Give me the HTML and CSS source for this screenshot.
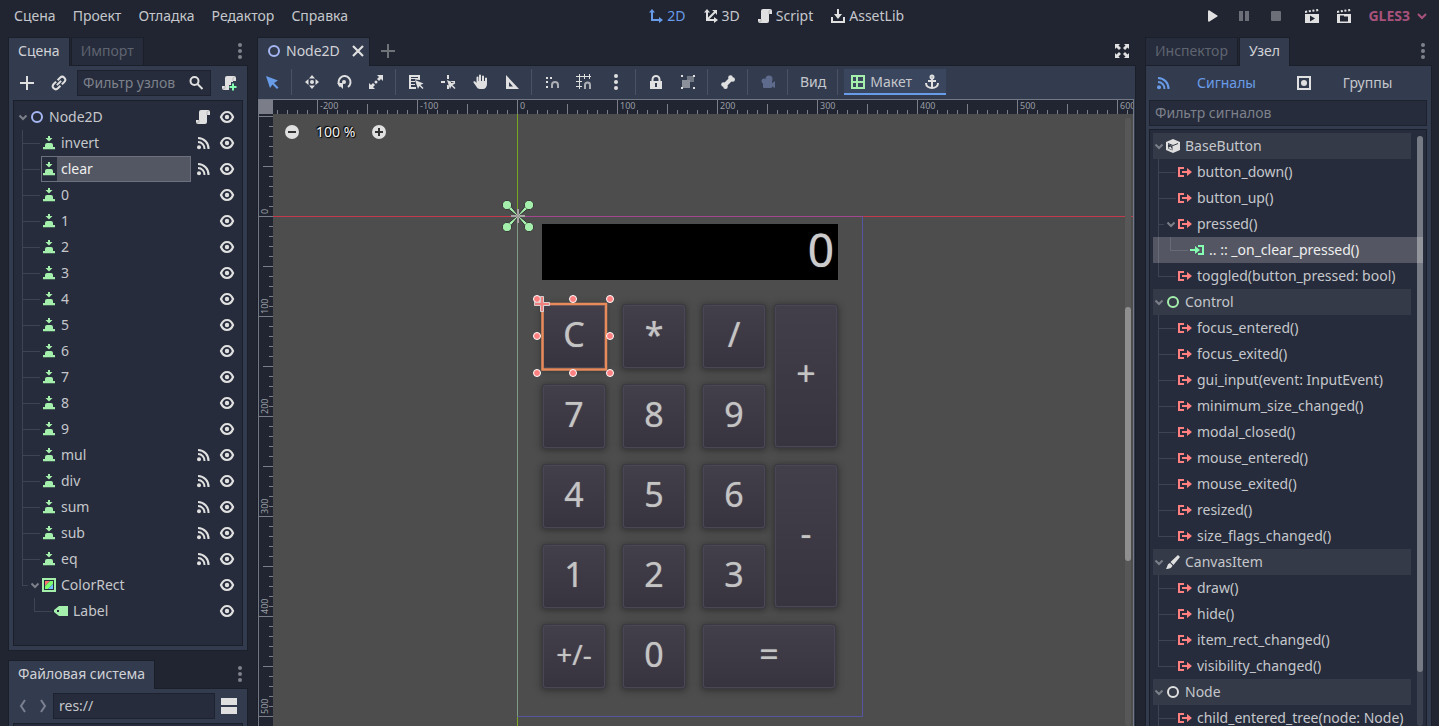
FILE: index.html
```html
<!DOCTYPE html>
<html lang="ru">
<head>
<meta charset="utf-8">
<title>Node2D</title>
<link rel="stylesheet" href="styles.css">
</head>
<body>
<svg class="defs" aria-hidden="true">
  <symbol id="chev" viewBox="0 0 12 12"><path d="M2.500 4.500 6 8l3.500-3.500" fill="none" stroke="currentColor" stroke-width="2"/></symbol>
  <symbol id="ring" viewBox="0 0 16 16"><circle cx="8" cy="8" r="5" fill="none" stroke="currentColor" stroke-width="2"/></symbol>
  <symbol id="button" viewBox="0 0 16 16"><path fill="currentColor" d="M7 1h2v2h2.500L8 6.500 4.500 3H7zM6 8h4a2 2 0 0 1 2 2v2H4v-2a2 2 0 0 1 2-2zM2 12h12v2.300H2z"/></symbol>
  <symbol id="signal" viewBox="0 0 16 16"><g fill="none" stroke="currentColor" stroke-width="2"><path d="M3 3a10.500 10.500 0 0 1 10.500 11"/><path d="M3 7a6.500 6.500 0 0 1 6.500 7"/></g><circle cx="4" cy="12.300" r="2" fill="currentColor"/></symbol>
  <symbol id="eye" viewBox="0 0 16 16"><path fill="none" stroke="currentColor" stroke-width="2.200" d="M2 8c1.300-3.300 3.800-5 6-5s4.700 1.700 6 5c-1.300 3.300-3.800 5-6 5s-4.700-1.700-6-5z"/><circle cx="8" cy="8" r="2.200" fill="currentColor"/></symbol>
  <symbol id="script" viewBox="0 0 16 16"><path fill="#e0e0e0" d="M6 1a2 2 0 0 0-2 2v8H1v2a2 2 0 0 0 2 2h7a2 2 0 0 0 2-2V6h3V3a2 2 0 0 0-2-2z"/><path fill="none" stroke="#b4b4b4" d="M12 6V3.500A1.500 1.500 0 0 1 13.500 2M4 11v2a1 1 0 0 1-2 0"/></symbol>
  <symbol id="plus" viewBox="0 0 16 16"><path fill="currentColor" d="M7 1h2v6h6v2H9v6H7V9H1V7h6z"/></symbol>
  <symbol id="link" viewBox="0 0 16 16"><g fill="none" stroke="currentColor" stroke-width="2" transform="rotate(-45 8 8)"><path d="M7 5H3.500a3 3 0 0 0 0 6H7M9 5h3.500a3 3 0 0 1 0 6H9M5 8h6"/></g></symbol>
  <symbol id="search" viewBox="0 0 16 16"><circle cx="6.500" cy="6" r="4" fill="none" stroke="currentColor" stroke-width="2"/><path d="m9.500 9 5 5" stroke="currentColor" stroke-width="2"/></symbol>
  <symbol id="dots" viewBox="0 0 16 16"><g fill="currentColor"><circle cx="8" cy="2" r="2"/><circle cx="8" cy="8" r="2"/><circle cx="8" cy="14" r="2"/></g></symbol>
  <symbol id="close" viewBox="0 0 16 16"><path d="m3 3 10 10M13 3 3 13" stroke="currentColor" stroke-width="2.200"/></symbol>
  <symbol id="slot" viewBox="0 0 16 16"><path fill="currentColor" d="M1 7h5V4l5 4-5 4V9H1zM9 3h6v10H9v-2h4V5H9z"/></symbol>
  <symbol id="emit" viewBox="0 0 16 16"><path fill="currentColor" d="M1 3h6v2H3v6h4v2H1zM5 7h5V4l5 4-5 4V9H5z"/></symbol>
  <symbol id="clap" viewBox="0 0 16 16"><path fill="#e0e0e0" fill-rule="evenodd" d="m1 3 2-.4.4 2L1 5zM4.600 2.300l2-.4.4 2-2 .4zM8.200 1.800l2-.4.4 2-2 .4zM12 1.300l2-.3.4 2-2 .4zM1 6h14v9H1z"/></symbol>
  <symbol id="cursor" viewBox="0 0 16 16"><path fill="currentColor" d="m2 2 4 12 2.500-3.500L13 15l1.500-1.500L10 9l4-2.500z"/></symbol>
</svg>

<header class="menubar">
  <nav class="menus">
    <button>Сцена</button><button>Проект</button><button>Отладка</button><button>Редактор</button><button>Справка</button>
  </nav>
  <div class="menus">
    <button class="blue"><svg class="i" viewBox="0 0 16 16"><path fill="currentColor" d="M4 1 1 4.500h2V13h8v2l4-3-4-3v2H5V4.500h2z"/></svg>2D</button>
    <button><svg class="i" viewBox="0 0 16 16"><path fill="#e0e0e0" d="M4 1 1 4.500h2V13h8v2l4-3-4-3v2H6.400l6-6L14 7V2H9l2 1.600-6 6V4.500h2z"/></svg>3D</button>
    <button><svg class="i"><use href="#script"/></svg>Script</button>
    <button><svg class="i" viewBox="0 0 16 16"><path fill="#e0e0e0" d="M7 1h2v5h3l-4 5-4-5h3zM1 9h2v4h10V9h2v6H1z"/></svg>AssetLib</button>
  </div>
  <div class="runbar">
    <button aria-label="Запустить"><svg class="i" viewBox="0 0 16 16"><path fill="#e0e0e0" d="M4 3.500a1 1 0 0 1 1.500-1l7 4.500a1 1 0 0 1 0 2l-7 4.500a1 1 0 0 1-1.500-1z"/></svg></button>
    <button aria-label="Пауза"><svg class="i" viewBox="0 0 16 16"><path fill="#6c6f77" d="M3 3h4v10H3zM9 3h4v10H9z"/></svg></button>
    <button class="stop" aria-label="Стоп"><svg class="i" viewBox="0 0 16 16"><rect x="3" y="3" width="10" height="10" rx="1" fill="#6c6f77"/></svg></button>
    <button aria-label="Запустить сцену"><svg class="i" viewBox="0 0 16 16"><use href="#clap"/><path fill="#202531" d="m6 7.500 5 3-5 3z"/></svg></button>
    <button aria-label="Выбрать сцену"><svg class="i" viewBox="0 0 16 16"><use href="#clap"/><path fill="#202531" d="M4 7.500h4v1h4v5H4z"/></svg></button>
    <button class="gles">GLES3<svg class="i" viewBox="0 0 16 16"><path d="m4 6 4 4 4-4" fill="none" stroke="currentColor" stroke-width="2"/></svg></button>
  </div>
</header>

<main class="editor">
  <div class="left">
    <section class="dock grow">
      <div class="tabs"><button class="tab on">Сцена</button><button class="tab">Импорт</button><button class="more" aria-label="Меню"><svg class="i"><use href="#dots"/></svg></button></div>
      <div class="panel">
        <div class="bar">
          <button class="tool" aria-label="Добавить"><svg class="i"><use href="#plus"/></svg></button>
          <button class="tool" aria-label="Ссылка"><svg class="i"><use href="#link"/></svg></button>
          <label class="field"><input type="text" placeholder="Фильтр узлов" aria-label="Фильтр узлов"><svg class="i"><use href="#search"/></svg></label>
          <button class="tool" aria-label="Скрипт"><svg class="i" viewBox="0 0 16 16"><use href="#script"/><path fill="#333b4f" d="M10 7h6v9H10zM8 10h3v5H8z"/><path fill="#84ffb1" d="M11 8.500h2V11h2.500v2H13v2.500h-2V13H8.500v-2H11z"/></svg></button>
        </div>
        <ul class="tree">
          <li class="row"><svg class="ch"><use href="#chev"/></svg><svg class="i node"><use href="#ring"/></svg><span class="name">Node2D</span><svg class="i"><use href="#script"/></svg><svg class="i"><use href="#eye"/></svg></li>
          <li class="row kid"><svg class="i green"><use href="#button"/></svg><span class="name">invert</span><svg class="i"><use href="#signal"/></svg><svg class="i"><use href="#eye"/></svg></li>
          <li class="row kid"><span class="picked"><svg class="i green"><use href="#button"/></svg><span class="name">clear</span></span><svg class="i"><use href="#signal"/></svg><svg class="i"><use href="#eye"/></svg></li>
          <li class="row kid"><svg class="i green"><use href="#button"/></svg><span class="name">0</span><svg class="i"><use href="#eye"/></svg></li>
          <li class="row kid"><svg class="i green"><use href="#button"/></svg><span class="name">1</span><svg class="i"><use href="#eye"/></svg></li>
          <li class="row kid"><svg class="i green"><use href="#button"/></svg><span class="name">2</span><svg class="i"><use href="#eye"/></svg></li>
          <li class="row kid"><svg class="i green"><use href="#button"/></svg><span class="name">3</span><svg class="i"><use href="#eye"/></svg></li>
          <li class="row kid"><svg class="i green"><use href="#button"/></svg><span class="name">4</span><svg class="i"><use href="#eye"/></svg></li>
          <li class="row kid"><svg class="i green"><use href="#button"/></svg><span class="name">5</span><svg class="i"><use href="#eye"/></svg></li>
          <li class="row kid"><svg class="i green"><use href="#button"/></svg><span class="name">6</span><svg class="i"><use href="#eye"/></svg></li>
          <li class="row kid"><svg class="i green"><use href="#button"/></svg><span class="name">7</span><svg class="i"><use href="#eye"/></svg></li>
          <li class="row kid"><svg class="i green"><use href="#button"/></svg><span class="name">8</span><svg class="i"><use href="#eye"/></svg></li>
          <li class="row kid"><svg class="i green"><use href="#button"/></svg><span class="name">9</span><svg class="i"><use href="#eye"/></svg></li>
          <li class="row kid"><svg class="i green"><use href="#button"/></svg><span class="name">mul</span><svg class="i"><use href="#signal"/></svg><svg class="i"><use href="#eye"/></svg></li>
          <li class="row kid"><svg class="i green"><use href="#button"/></svg><span class="name">div</span><svg class="i"><use href="#signal"/></svg><svg class="i"><use href="#eye"/></svg></li>
          <li class="row kid"><svg class="i green"><use href="#button"/></svg><span class="name">sum</span><svg class="i"><use href="#signal"/></svg><svg class="i"><use href="#eye"/></svg></li>
          <li class="row kid"><svg class="i green"><use href="#button"/></svg><span class="name">sub</span><svg class="i"><use href="#signal"/></svg><svg class="i"><use href="#eye"/></svg></li>
          <li class="row kid"><svg class="i green"><use href="#button"/></svg><span class="name">eq</span><svg class="i"><use href="#signal"/></svg><svg class="i"><use href="#eye"/></svg></li>
          <li class="row kid open last"><svg class="ch"><use href="#chev"/></svg><svg class="i" viewBox="0 0 16 16"><path fill="#a5efac" d="M1 1h14v14H1z"/><path fill="#262c3b" d="M3 3h10v10H3z"/><path fill="#ff7070" d="M4 4h5L4 9z"/><path fill="#7aff70" d="M9 4h3v3l-5 5H4V9z"/><path fill="#70bfff" d="M12 7v5H7z"/></svg><span class="name">ColorRect</span><svg class="i"><use href="#eye"/></svg></li>
          <li class="row grand last"><svg class="i green" viewBox="0 0 16 16"><path fill="currentColor" fill-rule="evenodd" d="M6 3h9v10H6L1 9V7zM4 7v2h2V7z"/></svg><span class="name">Label</span><svg class="i"><use href="#eye"/></svg></li>
        </ul>
      </div>
    </section>
    <section class="dock files">
      <div class="tabs"><button class="tab on">Файловая система</button><button class="more" aria-label="Меню"><svg class="i"><use href="#dots"/></svg></button></div>
      <div class="panel">
        <div class="bar path">
          <button class="arrow" aria-label="Назад"><svg class="i" viewBox="0 0 16 16"><path d="m10 2-4 6 4 6" fill="none" stroke="currentColor" stroke-width="2"/></svg></button>
          <button class="arrow" aria-label="Вперёд"><svg class="i" viewBox="0 0 16 16"><path d="m6 2 4 6-4 6" fill="none" stroke="currentColor" stroke-width="2"/></svg></button>
          <label class="field"><input type="text" value="res://" aria-label="Путь"></label>
          <button class="tool" aria-label="Вид списка"><svg class="i" viewBox="0 0 16 16"><path fill="#e0e0e0" d="M0 0h16v7H0zM0 9h16v7H0z"/></svg></button>
        </div>
        <div class="tree"></div>
      </div>
    </section>
  </div>

  <section class="dock center">
    <div class="tabs">
      <button class="tab on scene"><svg class="i node"><use href="#ring"/></svg>Node2D<svg class="i"><use href="#close"/></svg></button>
      <button class="add" aria-label="Новая сцена"><svg class="i"><use href="#plus"/></svg></button>
      <button class="more full" aria-label="Развернуть"><svg class="i" viewBox="0 0 16 16"><path fill="#e0e0e0" d="M1 1h5L4.500 2.500 7 5 5 7 2.500 4.500 1 6zM15 1h-5l1.500 1.500L9 5l2 2 2.500-2.500L15 6zM1 15h5l-1.500-1.500L7 11 5 9l-2.500 2.500L1 10zM15 15h-5l1.500-1.500L9 11l2-2 2.500 2.500L15 10z"/></svg></button>
    </div>
    <div class="panel">
      <div class="toolbar">
        <button class="tool blue" aria-label="Выделение"><svg class="i"><use href="#cursor"/></svg></button><i class="sep"></i>
        <button class="tool" aria-label="Перемещение"><svg class="i" viewBox="0 0 16 16"><path fill="currentColor" d="m8 1 3 3.500H5zM8 15l3-3.500H5zM1 8l3.500-3v6zM15 8l-3.500-3v6z"/><circle cx="8" cy="8" r="2" fill="currentColor"/></svg></button>
        <button class="tool" aria-label="Поворот"><svg class="i" viewBox="0 0 16 16"><path d="M4.500 12.500A6 6 0 1 1 12 13" fill="none" stroke="currentColor" stroke-width="2"/><path fill="currentColor" d="M1 9h6v6z"/><circle cx="8" cy="8" r="2" fill="currentColor"/></svg></button>
        <button class="tool" aria-label="Масштаб"><svg class="i" viewBox="0 0 16 16"><path fill="currentColor" d="M9 1h6v6l-2-2-2 2-2-2 2-2zM7 15H1V9l2 2 2-2 2 2-2 2z"/><circle cx="8" cy="8" r="1.500" fill="currentColor"/></svg></button><i class="sep"></i>
        <button class="tool" aria-label="Список"><svg class="i" viewBox="0 0 16 16"><path fill="currentColor" fill-rule="evenodd" d="M1 1h11v5L7 5.500V5H3v2h4v1H3v2h4v1H3v2h5v2H1zM3 3v1h7V3z"/><path fill="currentColor" d="m7 6 3 9 1.500-3 3 3 1-1-3-3 3-1.500z"/></svg></button>
        <button class="tool" aria-label="Опорная точка"><svg class="i" viewBox="0 0 16 16"><path fill="currentColor" d="M7 1h2v4H7zM1 7h4v2H1zM11 7h4v2h-4zM7 11h2v4H7zM7 6l3 9 1.500-3 3 3 1-1-3-3 3-1.500z"/></svg></button>
        <button class="tool" aria-label="Панорама"><svg class="i" viewBox="0 0 16 16"><path fill="currentColor" d="M7 1.500a1 1 0 0 1 2 0V7h1V2.500a1 1 0 0 1 2 0V7h1V4.500a1 1 0 0 1 2 0V10c0 3-2 5-4 5H8c-2 0-3-1-4-3L1.500 8.500c-.5-1 1-1.700 2-.7L4.500 9V3.500a1 1 0 0 1 2 0V7H7z"/></svg></button>
        <button class="tool" aria-label="Линейка"><svg class="i" viewBox="0 0 16 16"><path fill="currentColor" fill-rule="evenodd" d="M2 1v14h13zm3 7 4 4.500H5z"/></svg></button><i class="sep"></i>
        <button class="tool" aria-label="Умная привязка"><svg class="i" viewBox="0 0 16 16"><path fill="currentColor" d="M2 3h2v2H2zM6 3h2v2H6zM2 7h2v2H2zM2 12h2v2H2z"/><path d="M8 14v-3a3 3 0 0 1 6 0v3" fill="none" stroke="currentColor" stroke-width="2" opacity=".7"/></svg></button>
        <button class="tool" aria-label="Привязка к сетке"><svg class="i" viewBox="0 0 16 16"><path d="M3.500 0v15M8.500 0v5M13.500 0v5M0 2.500h15M0 7.500h6M0 12.500h6" fill="none" stroke="currentColor"/><path d="M9 15v-4a2.500 2.500 0 0 1 5 0v4" fill="none" stroke="currentColor" stroke-width="2" opacity=".7"/></svg></button>
        <button class="tool" aria-label="Параметры привязки"><svg class="i"><use href="#dots"/></svg></button><i class="sep"></i>
        <button class="tool" aria-label="Заблокировать"><svg class="i" viewBox="0 0 16 16"><path d="M4.500 8V5.500a3.500 3.500 0 0 1 7 0V8" fill="none" stroke="currentColor" stroke-width="2"/><path fill="currentColor" fill-rule="evenodd" d="M2 7h12v8H2zm5 2v4h2V9z"/></svg></button>
        <button class="tool" aria-label="Группировать"><svg class="i" viewBox="0 0 16 16"><path fill="#737885" d="M7 2h7v6H7z"/><path fill="#8b909b" d="M2 6h8v8H2z"/><path fill="currentColor" d="M1 1h2v2H1zM13 1h2v2h-2zM1 13h2v2H1zM13 13h2v2h-2z"/></svg></button><i class="sep"></i>
        <button class="tool" aria-label="Кости"><svg class="i" viewBox="0 0 16 16"><path d="m5 11 6-6" stroke="currentColor" stroke-width="4"/><g fill="currentColor"><circle cx="3.500" cy="10.500" r="2.300"/><circle cx="5.500" cy="12.700" r="2.300"/><circle cx="10.500" cy="3.500" r="2.300"/><circle cx="12.700" cy="5.500" r="2.300"/></g></svg></button><i class="sep"></i>
        <button class="tool dim" aria-label="Камера"><svg class="i" viewBox="0 0 16 16"><g fill="currentColor"><circle cx="9" cy="5" r="3.500"/><circle cx="4" cy="7" r="2.500"/><rect x="3" y="6" width="9" height="8" rx="1"/><path d="m11 10 4-3v7l-4-2z"/></g></svg></button><i class="sep"></i>
        <button class="text">Вид</button><i class="sep"></i>
        <div class="layout"><button class="text"><svg class="i green" viewBox="0 0 16 16"><path d="M2 2h12v12H2zM7 2v12M2 8h12" fill="none" stroke="currentColor" stroke-width="2"/></svg>Макет</button><button class="tool" aria-label="Якорь"><svg class="i" viewBox="0 0 16 16"><circle cx="8" cy="3" r="1.500" fill="none" stroke="currentColor" stroke-width="2"/><path d="M8 5v9M4 7h8M2 9c0 3.500 3 5 6 5s6-1.500 6-5" fill="none" stroke="currentColor" stroke-width="2"/></svg></button></div>
      </div>
      <div class="view">
        <div class="corner"></div>
        <div class="ruler-x"><span></span><span>-200</span><span>-100</span><span>0</span><span>100</span><span>200</span><span>300</span><span>400</span><span>500</span><span>600</span></div>
        <div class="ruler-y"><span>0</span><span>100</span><span>200</span><span>300</span><span>400</span><span>500</span></div>
        <div class="canvas">
          <i class="axis-x"></i><i class="axis-y"></i>
          <div class="stage">
            <output class="display">0</output>
            <button class="key c1 r1">C</button><button class="key c2 r1">*</button><button class="key c3 r1">/</button><button class="key c4 r1 tall">+</button>
            <button class="key c1 r2">7</button><button class="key c2 r2">8</button><button class="key c3 r2">9</button>
            <button class="key c1 r3">4</button><button class="key c2 r3">5</button><button class="key c3 r3">6</button><button class="key c4 r3 tall">-</button>
            <button class="key c1 r4">1</button><button class="key c2 r4">2</button><button class="key c3 r4">3</button>
            <button class="key c1 r5 small">+/-</button><button class="key c2 r5">0</button><button class="key c3 r5 wide">=</button>
            <svg class="anchors" viewBox="0 0 32 32"><g fill="#a5efac"><g stroke="#333" stroke-width="1"><circle cx="5" cy="5" r="4.500"/><circle cx="27" cy="5" r="4.500"/><circle cx="5" cy="27" r="4.500"/><circle cx="27" cy="27" r="4.500"/><path d="m16 15-7-8.500L6.500 9 15 16l-8.500 7L9 25.500 16 17l7 8.500 2.500-2.500L17 16l8.500-7L23 6.500z"/></g><circle cx="5" cy="5" r="4"/><circle cx="27" cy="5" r="4"/><circle cx="5" cy="27" r="4"/><circle cx="27" cy="27" r="4"/></g><path d="M16 9v5M16 18v5M9 16h5M18 16h5" stroke="#a9a3a6" stroke-width="2"/><circle cx="16" cy="16" r="2" fill="#a9a3a6"/></svg>
            <svg class="selection" viewBox="0 0 84 84"><rect x="10.500" y="10" width="63.500" height="65.500" fill="none" stroke="#e98a5b" stroke-width="2.500"/><g fill="#ff8080" stroke="#fff" stroke-width="1"><circle cx="5" cy="5" r="3.500"/><circle cx="41" cy="5" r="3.500"/><circle cx="78" cy="5" r="3.500"/><circle cx="5" cy="42" r="3.500"/><circle cx="78" cy="42" r="3.500"/><circle cx="5" cy="79" r="3.500"/><circle cx="41" cy="79" r="3.500"/><circle cx="78" cy="79" r="3.500"/></g><path d="M8.500 2.500h3v6h6v3h-6v6h-3v-6h-6v-3h6z" fill="#f08080" stroke="#d8d0d0"/></svg>
          </div>
          <div class="zoom">
            <button aria-label="Уменьшить"><svg class="i" viewBox="0 0 16 16"><circle cx="8" cy="8" r="7" fill="#e0e0e0"/><path fill="#333" d="M4 7h8v2H4z"/></svg></button><span>100 %</span><button aria-label="Увеличить"><svg class="i" viewBox="0 0 16 16"><circle cx="8" cy="8" r="7" fill="#e0e0e0"/><path fill="#333" d="M7 4h2v3h3v2H9v3H7V9H4V7h3z"/></svg></button>
          </div>
          <div class="scroll"><i></i></div>
        </div>
      </div>
    </div>
  </section>

  <section class="dock right">
    <div class="tabs"><button class="tab">Инспектор</button><button class="tab on">Узел</button><button class="more" aria-label="Меню"><svg class="i"><use href="#dots"/></svg></button></div>
    <div class="panel">
      <div class="modes">
        <button class="blue"><svg class="i"><use href="#signal"/></svg><span>Сигналы</span></button>
        <button><svg class="i" viewBox="0 0 16 16"><path d="M2 2h12v12H2z" fill="none" stroke="#e0e0e0" stroke-width="2"/><circle cx="8" cy="8" r="3" fill="#e0e0e0"/></svg><span>Группы</span></button>
      </div>
      <label class="field"><input type="text" placeholder="Фильтр сигналов" aria-label="Фильтр сигналов"></label>
      <div class="tree signals">
        <ul>
          <li class="row head"><svg class="ch"><use href="#chev"/></svg><svg class="i" viewBox="0 0 16 16"><path fill="currentColor" d="m8 1 7 3v8l-7 3-7-3V4z"/><path d="m3 6 4.500 2v4.500L3 10.500z" fill="#343a47"/><path d="m4 6 3.500-1.500L11 6 7.500 7.500z" fill="#e0e0e0"/><path d="m3 5.500 5 2 5-2" fill="none" stroke="#343a47"/><path d="m3 10 2.500-1.500L7.500 12" fill="currentColor"/></svg><span class="name">BaseButton</span></li>
          <li class="row kid"><svg class="i red"><use href="#emit"/></svg><span class="name">button_down()</span></li>
          <li class="row kid"><svg class="i red"><use href="#emit"/></svg><span class="name">button_up()</span></li>
          <li class="row kid open"><svg class="ch"><use href="#chev"/></svg><svg class="i red"><use href="#emit"/></svg><span class="name">pressed()</span></li>
          <li class="row grand last through sel"><svg class="i mint"><use href="#slot"/></svg><span class="name">.. :: _on_clear_pressed()</span></li>
          <li class="row kid last"><svg class="i red"><use href="#emit"/></svg><span class="name">toggled(button_pressed: bool)</span></li>
          <li class="row head"><svg class="ch"><use href="#chev"/></svg><svg class="i green"><use href="#ring"/></svg><span class="name">Control</span></li>
          <li class="row kid"><svg class="i red"><use href="#emit"/></svg><span class="name">focus_entered()</span></li>
          <li class="row kid"><svg class="i red"><use href="#emit"/></svg><span class="name">focus_exited()</span></li>
          <li class="row kid"><svg class="i red"><use href="#emit"/></svg><span class="name">gui_input(event: InputEvent)</span></li>
          <li class="row kid"><svg class="i red"><use href="#emit"/></svg><span class="name">minimum_size_changed()</span></li>
          <li class="row kid"><svg class="i red"><use href="#emit"/></svg><span class="name">modal_closed()</span></li>
          <li class="row kid"><svg class="i red"><use href="#emit"/></svg><span class="name">mouse_entered()</span></li>
          <li class="row kid"><svg class="i red"><use href="#emit"/></svg><span class="name">mouse_exited()</span></li>
          <li class="row kid"><svg class="i red"><use href="#emit"/></svg><span class="name">resized()</span></li>
          <li class="row kid last"><svg class="i red"><use href="#emit"/></svg><span class="name">size_flags_changed()</span></li>
          <li class="row head"><svg class="ch"><use href="#chev"/></svg><svg class="i" viewBox="0 0 16 16"><path fill="currentColor" d="m13 1 2 2-6.500 8-3-3zM5 9l2.500 2.500C7 14 4 15 1 15c1.500-2 1-5 4-6z"/></svg><span class="name">CanvasItem</span></li>
          <li class="row kid"><svg class="i red"><use href="#emit"/></svg><span class="name">draw()</span></li>
          <li class="row kid"><svg class="i red"><use href="#emit"/></svg><span class="name">hide()</span></li>
          <li class="row kid"><svg class="i red"><use href="#emit"/></svg><span class="name">item_rect_changed()</span></li>
          <li class="row kid last"><svg class="i red"><use href="#emit"/></svg><span class="name">visibility_changed()</span></li>
          <li class="row head"><svg class="ch"><use href="#chev"/></svg><svg class="i"><use href="#ring"/></svg><span class="name">Node</span></li>
          <li class="row kid"><svg class="i red"><use href="#emit"/></svg><span class="name">child_entered_tree(node: Node)</span></li>
        </ul>
        <div class="scroll"><i></i></div>
      </div>
    </div>
  </section>
</main>
</body>
</html>
```
FILE: styles.css
```css
* { box-sizing: border-box; }
body {
  margin: 0; height: 100vh; overflow: hidden;
  display: flex; flex-direction: column;
  background: #202531; color: #c5c7cc;
  font: 14px/20px "Noto Sans", sans-serif;
}
button, input { font: inherit; color: inherit; background: none; border: 0; padding: 0; margin: 0; }
button { display: flex; align-items: center; justify-content: center; white-space: nowrap; }
ul { list-style: none; margin: 0; padding: 0; }
.defs { position: absolute; width: 0; height: 0; }
.i { width: 16px; height: 16px; flex: none; color: #e0e0e0; }
.ch { width: 12px; height: 12px; flex: none; color: #7b7f89; }
.blue, .blue .i { color: #699ce8; }
.i.green { color: #a5efac; }
.i.node { color: #a5b7f3; }
.i.red { color: #ff8080; }
.i.mint { color: #84ffb1; }

.menubar { display: flex; justify-content: space-between; align-items: center; height: 32px; flex: none; padding: 0 4px 0 8px; }
.menus { display: flex; gap: 5px; }
.menus button { padding: 0 6px; gap: 3px; }
.runbar { display: flex; align-items: center; gap: 4px; }
.runbar button { width: 28px; height: 28px; }
.runbar .stop { margin-right: 4px; }
.runbar .gles { width: auto; gap: 4px; padding: 0 5px 0 6px; color: #a8527c; font-weight: 700; }
.gles .i { color: inherit; }

.editor { flex: 1; min-height: 0; display: grid; grid-template-columns: 240px minmax(0, 1fr) 287px; gap: 9px; padding: 5px 7px 0 8px; }
.left { display: flex; flex-direction: column; gap: 9px; min-height: 0; }
.dock { display: flex; flex-direction: column; min-height: 0; min-width: 0; }
.grow { flex: 1; }
.files { flex: 0 0 66px; }
.tabs { display: flex; height: 28px; flex: none; gap: 1px; }
.tab { height: 28px; padding: 0 9px 2px; background: #262c3b; color: #5f6471; border: 1px solid #1b1f29; border-width: 1px 1px 0; }
.tab.on { height: 29px; padding-bottom: 3px; background: #333b4f; color: #d0d2d6; position: relative; }
.more { margin-left: auto; width: 16px; }
.more .i { color: #7f828a; }
.panel { flex: 1; min-height: 0; display: flex; flex-direction: column; background: #333b4f; border: 1px solid #1b1f29; padding: 4px; }
.bar { display: flex; align-items: center; gap: 4px; height: 26px; flex: none; margin-bottom: 4px; }
.tool { width: 28px; height: 28px; flex: none; }
.field { flex: 1; min-width: 0; display: flex; align-items: center; height: 26px; background: #262c3b; border: 1px solid #1e222e; padding: 0 6px 0 5px; }
.field input { width: 100%; min-width: 0; outline: 0; }
.field input::placeholder { color: #7d818b; opacity: 1; }
.arrow { width: 20px; }
.arrow .i { color: #7b8190; }
.tree { flex: 1; min-height: 0; overflow: hidden; background: #262c3b; border: 1px solid #1b1f29; padding: 3px; }
.row { display: flex; align-items: center; height: 26px; padding-right: 4px; }
.row .name { flex: 1; padding-left: 4px; white-space: nowrap; }
.row .name + .i ~ .i, .picked + .i ~ .i { margin-left: 8px; }
.kid, .grand {
  background-image: linear-gradient(#3f4452, #3f4452), linear-gradient(#3f4452, #3f4452);
  background-repeat: no-repeat;
}
.kid { padding-left: 24px; background-size: 1px 100%, 18px 1px; background-position: 5px 0, 5px 13px; }
.kid.open { padding-left: 12px; background-size: 1px 100%, 6px 1px; }
.kid.last { background-size: 1px 50%, 18px 1px; }
.kid.open.last { background-size: 1px 50%, 6px 1px; }
.grand { padding-left: 36px; background-size: 1px 50%, 18px 1px; background-position: 17px 0, 17px 13px; }
.picked { flex: 1; display: flex; align-items: center; height: 26px; margin-right: 4px; background: linear-gradient(90deg, #262c3b 15px, #535763 15px); border: 1px solid #6d717d; color: #eee; }
.picked .i { margin-left: -1px; }
.path { gap: 0; }
.files .panel { border-bottom: 0; padding-bottom: 0; }

.scene { gap: 4px; padding: 0 3px 3px 8px; }
.scene .i:last-child { margin-left: 6px; }
.add { margin-left: 9px; width: 16px; }
.add .i { color: #6f7276; }
.tabs .add, .tabs .more { padding-bottom: 1px; }
.full { margin-right: 6px; }
.full .i { color: #e0e0e0; }
.center .panel { padding: 2px 0 0; border-bottom: 0; }
.toolbar { display: flex; align-items: center; gap: 4px; height: 28px; flex: none; }
.sep { width: 4px; height: 26px; flex: none; background: linear-gradient(#4b5264, #4b5264) 1px 0 / 1px 100% no-repeat; }
.text { padding: 0 6px; gap: 4px; height: 26px; }
.dim .i { color: #5f6b8c; }
.layout { display: flex; height: 26px; background: #3a455e; border-bottom: 2px solid #699ce8; }
.layout .tool, .layout .text { height: 26px; }
.view { flex: 1; min-height: 0; margin: 3px 1px 0 0; display: grid; grid-template: 14px minmax(0, 1fr) / 14px minmax(0, 1fr); border: 1px solid #737885; border-bottom: 0; }
.corner { background: #7b7e88; }
.ruler-x, .ruler-y { overflow: hidden; display: flex; font-size: 9px; line-height: 11px; color: #9a9da5; background-color: #202531; }
.ruler-x {
  background-repeat: repeat-x;
  background-image: linear-gradient(90deg, #7b7e88 1px, transparent 1px), linear-gradient(90deg, #7b7e88 1px, transparent 1px), linear-gradient(90deg, #7b7e88 1px, transparent 1px);
  background-size: 100px 14px, 50px 10px, 10px 4px;
  background-position: 44px 0, 44px 4px, 4px 10px;
}
.ruler-x span { width: 100px; flex: none; padding-left: 3px; }
.ruler-x span:first-child { width: 44px; }
.ruler-y {
  flex-direction: column; background-repeat: repeat-y;
  background-image: linear-gradient(#7b7e88 1px, transparent 1px), linear-gradient(#7b7e88 1px, transparent 1px), linear-gradient(#7b7e88 1px, transparent 1px);
  background-size: 14px 100px, 10px 50px, 4px 10px;
  background-position: 0 2px, 4px 2px, 10px 2px;
}
.ruler-y span { height: 100px; flex: none; writing-mode: vertical-rl; transform: rotate(180deg); padding-top: 2px; width: 11px; }
.ruler-y span:first-child { height: 102px; }
.canvas { position: relative; overflow: hidden; background: #4d4d4d; }
.axis-x { position: absolute; left: 0; right: 0; top: 102px; height: 1px; background: #c23a4d; }
.axis-y { position: absolute; top: 0; bottom: 0; left: 244px; width: 1px; background: #7aa520; }
.stage { position: absolute; left: 244px; top: 102px; width: 346px; height: 501px; border: 1px solid #5656a0; border-top-color: #a3478f; border-left-color: #7f9c86; }
.display { position: absolute; left: 24px; top: 7px; width: 296px; height: 56px; padding-right: 4px; background: #000; color: #ccc; font-size: 46px; line-height: 50px; text-align: right; text-shadow: 0 0 1px #aaa; }
.key { position: absolute; width: 62px; height: 63px; padding-bottom: 6px; border: 1px solid #4a4654; border-radius: 3px; background: linear-gradient(#423f4a, #38343f); box-shadow: 0 0 0 1px #3b3942, 0 1px 6px 2px #333; color: #c4c4c4; font-size: 34px; text-shadow: 0 0 1px #999; }
.c1 { left: 25px; } .c2 { left: 105px; } .c3 { left: 185px; } .c4 { left: 257px; }
.r1 { top: 88px; } .r2 { top: 168px; } .r3 { top: 248px; } .r4 { top: 328px; } .r5 { top: 408px; }
.tall { height: 142px; }
.wide { width: 132px; }
.small { font-size: 28px; }
.anchors { position: absolute; left: -16px; top: -17px; width: 32px; height: 32px; }
.selection { position: absolute; left: 14px; top: 77px; width: 84px; height: 84px; }
.zoom { position: absolute; left: 11px; top: 10px; height: 16px; display: flex; align-items: center; gap: 16px; color: #f4f4f4; text-shadow: 0 0 2px #000, 1px 1px 1px #000, -1px -1px 1px #000; }
.scroll { position: absolute; right: 2px; top: 4px; bottom: 0; width: 6px; background: #575757; border-radius: 3px; }
.scroll i { position: absolute; left: 0; top: 189px; width: 6px; height: 254px; background: #8f8f8f; border-radius: 3px; }

.modes { display: flex; gap: 4px; height: 26px; flex: none; margin-bottom: 4px; }
.modes button { flex: 1; padding: 0 4px 0 6px; }
.modes span { flex: 1; text-align: center; }
.right .panel { border-bottom: 0; padding: 4px 4px 0 3px; }
.right .tabs .more { margin-right: 1px; }
.right .field { flex: none; margin-bottom: 3px; }
.signals { position: relative; border-bottom: 0; }
.head { background: #343a47; margin-right: 12px; }
.sel { background-color: #545763; color: #eee; }
.grand.through { background-image: linear-gradient(#686b76, #686b76), linear-gradient(#686b76, #686b76), linear-gradient(#686b76, #686b76); background-size: 1px 50%, 18px 1px, 1px 100%; background-position: 17px 0, 17px 13px, 5px 0; }
.signals .scroll { top: 6px; right: 3px; background: rgba(255, 255, 255, 0.1); }
.signals .scroll i { top: 0; height: 536px; background: rgba(255, 255, 255, 0.3); }
```
